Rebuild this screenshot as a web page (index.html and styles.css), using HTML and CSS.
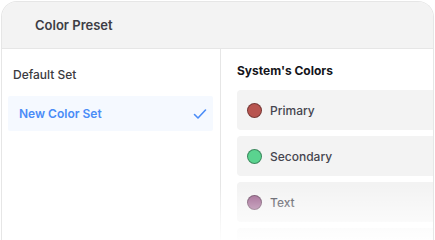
FILE: index.html
```html
<!DOCTYPE html>
<html>
<head>
<meta charset="utf-8">
<link rel="stylesheet" href="styles.css">
</head>
<body>
<div class="card">
  <div class="header">Color Preset</div>
  <div class="content">
    <div class="sets">
      <div class="set">Default Set</div>
      <div class="set active">
        <span>New Color Set</span>
        <svg class="check" width="14" height="12" viewBox="0 0 14 12"><path d="M1.5 6.5 L5 10 L12.5 2" fill="none" stroke="#4a8cf7" stroke-width="1.6" stroke-linecap="round" stroke-linejoin="round"/></svg>
      </div>
    </div>
    <div class="colors">
      <div class="title">System's Colors</div>
      <div class="row"><span class="dot" style="background:#b85550"></span>Primary</div>
      <div class="row"><span class="dot" style="background:#5ad38f"></span>Secondary</div>
      <div class="row"><span class="dot" style="background:#9a5b8a"></span>Text</div>
      <div class="row"></div>
    </div>
  </div>
  <div class="fade"></div>
</div>
</body>
</html>
```
FILE: styles.css
```css
html, body { margin: 0; padding: 0; background: #fff; }
body { width: 435px; height: 240px; overflow: hidden; font-family: Inter, "Liberation Sans", sans-serif; }
.card {
  position: relative;
  margin: 1px 0 0 1px;
  width: 431px;
  height: 238px;
  border: 1px solid #e6e6e6;
  border-bottom: none;
  border-radius: 16px 16px 0 0;
  overflow: hidden;
  background: #fff;
}
.header {
  height: 46px;
  background: #f3f3f3;
  border-bottom: 1px solid #e6e6e6;
  display: flex;
  align-items: center;
  padding-left: 33px;
  font-size: 13px;
  font-weight: 600;
  color: #3d3d44;
}
.content { display: grid; grid-template-columns: 219px 1fr; height: 191px; overflow: hidden; }
.sets { border-right: 1px solid #e6e6e6; padding: 8px 7px 8px 6px; display: flex; flex-direction: column; gap: 4px; }
.set {
  height: 35px;
  display: flex; align-items: center; justify-content: space-between;
  padding: 0 5px;
  font-size: 12px; font-weight: 500; color: #3a3a40;
}
.set.active {
  background: #f5f9ff;
  color: #4a8cf7; font-weight: 600;
  padding: 0 6px 0 11px;
  border-radius: 2px;
}
.check { display: block; }
.colors { padding: 14px 0 0 16px; display: flex; flex-direction: column; gap: 6px; }
.title { font-size: 12px; font-weight: 700; color: #15151a; margin-bottom: 5px; line-height: 16px; }
.row {
  height: 40px;
  background: #f3f3f3;
  border-radius: 4px 0 0 4px;
  display: flex; align-items: center; gap: 8px;
  padding-left: 10px;
  font-size: 12px; font-weight: 500; color: #45454f;
  flex-shrink: 0;
}
.dot { width: 13px; height: 13px; border-radius: 50%; border: 1px solid rgba(0,0,0,0.35); }
.fade {
  position: absolute; left: -2px; right: 0; bottom: 0; height: 55px;
  background: linear-gradient(to bottom, rgba(255,255,255,0) 0%, rgba(255,255,255,0.5) 50%, rgba(255,255,255,0.92) 100%);
  pointer-events: none;
}
```
